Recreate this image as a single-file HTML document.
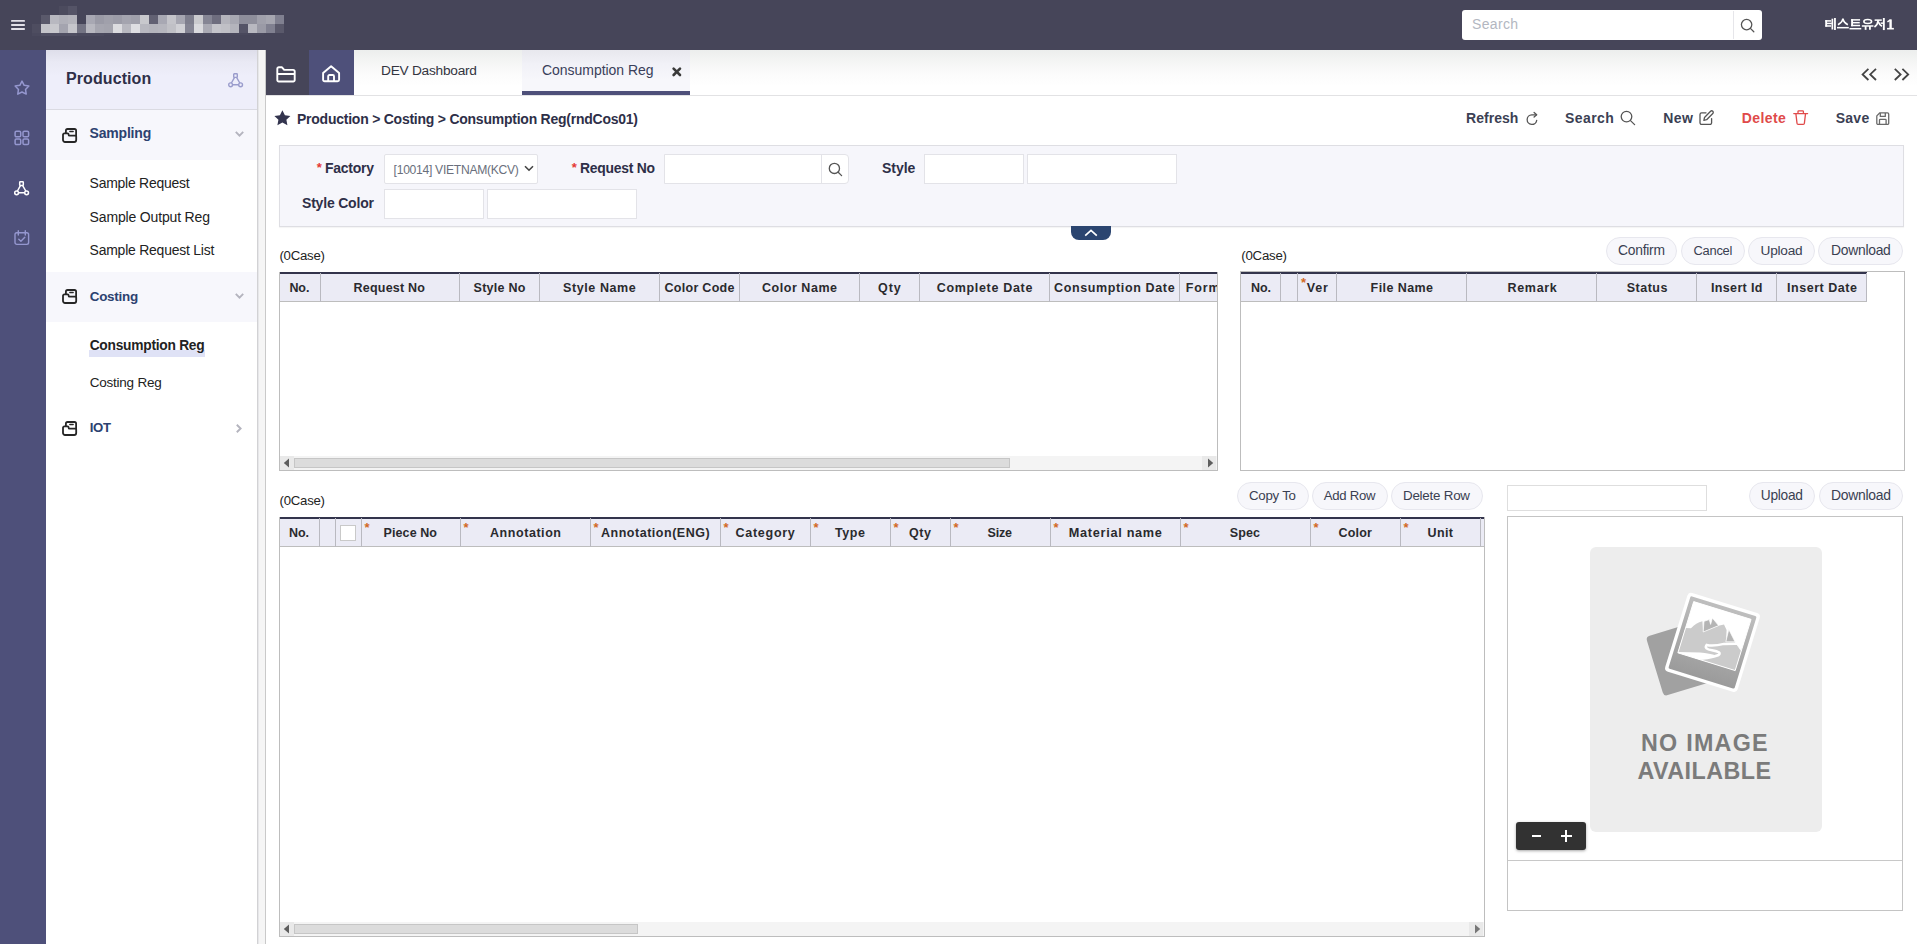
<!DOCTYPE html>
<html lang="en"><head><meta charset="utf-8"><title>Consumption Reg</title>
<style>
html,body{margin:0;padding:0}
body{width:1917px;height:944px;position:relative;overflow:hidden;background:#fff;font-family:"Liberation Sans",sans-serif}
.a{position:absolute;box-sizing:border-box}
.t{position:absolute;white-space:pre;line-height:1;font-family:"Liberation Sans",sans-serif}
svg{position:absolute;overflow:visible}
/* header */
#hdr{left:0;top:0;width:1917px;height:50px;background:#464559}
#rail{left:0;top:50px;width:46px;height:894px;background:#4e507a}
/* sidebar */
#sb{left:46px;top:50px;width:211px;height:894px;background:#fff}
#sbh{left:46px;top:50px;width:211px;height:60px;background:linear-gradient(#dedeea 0,#e9e9f4 12px,#eeeefa 26px);border-bottom:1px solid #dadae2}
.sbg{left:46px;width:211px;height:50px;background:#f7f7fc}
#hl{left:89px;top:350px;width:116px;height:7px;background:#dfe2f6}
/* splitter */
#sp{left:257px;top:50px;width:9px;height:894px;background:#f5f5f5;border-left:1px solid #d2d2d4;border-right:1px solid #c9c9c9}
#sp i{position:absolute;left:0;top:0;width:1px;height:100%;background:#e7e7ea}
/* tab bar */
#tb{left:266px;top:50px;width:1651px;height:46px;background:linear-gradient(#eceeed 0,#f4f5f4 11px,#fbfbfb 23px,#fff 36px);border-bottom:1px solid #e2e2e4}
#tfold{left:266px;top:50px;width:43px;height:45px;background:#464559}
#thome{left:309px;top:50px;width:45px;height:45px;background:#4e507a}
#tact{left:522px;top:50px;width:168px;height:45px;background:linear-gradient(#e8e8ee 0,#f1f1f7 14px,#f7f7fb 30px);border-bottom:4px solid #4e507a}
/* filter */
#flt{left:279px;top:145px;width:1625px;height:82px;background:#f6f6fb;border:1px solid #dedee3;box-shadow:0 1px 1px rgba(0,0,0,.04)}
.in{background:#fff;border:1px solid #e3e3e8;height:30px}
#col{left:1071px;top:226px;width:40px;height:14px;background:#2b4570;border-radius:0 0 8px 8px}
/* grids */
.g{border:1px solid #bdbdbd;background:#fff}
.gh{background:#ebebf5;border-top:2px solid #33344c;border-bottom:1px solid #bdbdbd;height:30px}
.sep{width:1px;background:#b9b9c0}
.sc{background:#f4f4f4;height:14px}
.scb{background:#e9e9e9;width:14px;height:14px}
.th{background:#dcdcdc;border:1px solid #c6c6c6;height:10px}
.pill{height:28px;border-radius:14px;background:#f7f7fb;border:1px solid #e7e7ee}
.ast{color:#d2691e;font-size:13px;font-weight:700;line-height:1;position:absolute;font-family:"Liberation Sans",sans-serif}
.rast{color:#e53935;font-size:13px;font-weight:700;line-height:1;position:absolute;font-family:"Liberation Sans",sans-serif}

</style></head>
<body>
<!-- ===== header ===== -->
<div id="hdr" class="a"></div>
<svg style="left:11px;top:19px" width="14" height="12" viewBox="0 0 14 12"><path d="M0.9 1.9h12.2M0.9 6h12.2M0.9 10h12.2" stroke="#e3e1e9" stroke-width="1.9" stroke-linecap="round" fill="none"/></svg>
<div id="logo" class="a" style="left:32px;top:6px;width:252px;height:27px">
<i style="position:absolute;left:9px;top:9px;width:9px;height:9px;background:#5a596b"></i><i style="position:absolute;left:18px;top:9px;width:9px;height:9px;background:#b8b8c0"></i><i style="position:absolute;left:27px;top:9px;width:9px;height:9px;background:#b0b0b9"></i><i style="position:absolute;left:36px;top:9px;width:9px;height:9px;background:#b4b4bc"></i><i style="position:absolute;left:45px;top:9px;width:9px;height:9px;background:#464559"></i><i style="position:absolute;left:54px;top:9px;width:9px;height:9px;background:#a8a8b3"></i><i style="position:absolute;left:63px;top:9px;width:9px;height:9px;background:#9a9aa6"></i><i style="position:absolute;left:72px;top:9px;width:9px;height:9px;background:#a0a0ab"></i><i style="position:absolute;left:81px;top:9px;width:9px;height:9px;background:#9c9ca8"></i><i style="position:absolute;left:90px;top:9px;width:9px;height:9px;background:#a4a4af"></i><i style="position:absolute;left:99px;top:9px;width:9px;height:9px;background:#a0a0ab"></i><i style="position:absolute;left:108px;top:9px;width:9px;height:9px;background:#c8c8cd"></i><i style="position:absolute;left:117px;top:9px;width:9px;height:9px;background:#626173"></i><i style="position:absolute;left:126px;top:9px;width:9px;height:9px;background:#a8a8b3"></i><i style="position:absolute;left:135px;top:9px;width:9px;height:9px;background:#c4c4ca"></i><i style="position:absolute;left:144px;top:9px;width:9px;height:9px;background:#a6a6b1"></i><i style="position:absolute;left:153px;top:9px;width:9px;height:9px;background:#7e7e8d"></i><i style="position:absolute;left:162px;top:9px;width:9px;height:9px;background:#cacace"></i><i style="position:absolute;left:171px;top:9px;width:9px;height:9px;background:#858594"></i><i style="position:absolute;left:180px;top:9px;width:9px;height:9px;background:#6e6d7e"></i><i style="position:absolute;left:189px;top:9px;width:9px;height:9px;background:#b4b4bc"></i><i style="position:absolute;left:198px;top:9px;width:9px;height:9px;background:#a8a8b2"></i><i style="position:absolute;left:207px;top:9px;width:9px;height:9px;background:#8e8e9b"></i><i style="position:absolute;left:216px;top:9px;width:9px;height:9px;background:#8e8e9b"></i><i style="position:absolute;left:225px;top:9px;width:9px;height:9px;background:#a0a0ab"></i><i style="position:absolute;left:234px;top:9px;width:9px;height:9px;background:#a6a6b0"></i><i style="position:absolute;left:243px;top:9px;width:9px;height:9px;background:#808090"></i><i style="position:absolute;left:9px;top:18px;width:9px;height:9px;background:#c4c4ca"></i><i style="position:absolute;left:18px;top:18px;width:9px;height:9px;background:#c8c8cd"></i><i style="position:absolute;left:27px;top:18px;width:9px;height:9px;background:#a4a4af"></i><i style="position:absolute;left:36px;top:18px;width:9px;height:9px;background:#c6c6cc"></i><i style="position:absolute;left:45px;top:18px;width:9px;height:9px;background:#747484"></i><i style="position:absolute;left:54px;top:18px;width:9px;height:9px;background:#b8b8c0"></i><i style="position:absolute;left:63px;top:18px;width:9px;height:9px;background:#a6a6b0"></i><i style="position:absolute;left:72px;top:18px;width:9px;height:9px;background:#a4a4ae"></i><i style="position:absolute;left:81px;top:18px;width:9px;height:9px;background:#dcdce0"></i><i style="position:absolute;left:90px;top:18px;width:9px;height:9px;background:#b8b8c0"></i><i style="position:absolute;left:99px;top:18px;width:9px;height:9px;background:#dedee2"></i><i style="position:absolute;left:108px;top:18px;width:9px;height:9px;background:#b8b8c0"></i><i style="position:absolute;left:117px;top:18px;width:9px;height:9px;background:#b4b4bc"></i><i style="position:absolute;left:126px;top:18px;width:9px;height:9px;background:#b6b6be"></i><i style="position:absolute;left:135px;top:18px;width:9px;height:9px;background:#c0c0c6"></i><i style="position:absolute;left:144px;top:18px;width:9px;height:9px;background:#d0d0d5"></i><i style="position:absolute;left:153px;top:18px;width:9px;height:9px;background:#848493"></i><i style="position:absolute;left:162px;top:18px;width:9px;height:9px;background:#dadade"></i><i style="position:absolute;left:171px;top:18px;width:9px;height:9px;background:#aaaab4"></i><i style="position:absolute;left:180px;top:18px;width:9px;height:9px;background:#c4c4ca"></i><i style="position:absolute;left:189px;top:18px;width:9px;height:9px;background:#c0c0c6"></i><i style="position:absolute;left:198px;top:18px;width:9px;height:9px;background:#b4b4bc"></i><i style="position:absolute;left:207px;top:18px;width:9px;height:9px;background:#555467"></i><i style="position:absolute;left:216px;top:18px;width:9px;height:9px;background:#b8b8c0"></i><i style="position:absolute;left:225px;top:18px;width:9px;height:9px;background:#9a9aa6"></i><i style="position:absolute;left:234px;top:18px;width:9px;height:9px;background:#808090"></i><i style="position:absolute;left:243px;top:18px;width:9px;height:9px;background:#5a596b"></i><i style="position:absolute;left:0px;top:18px;width:9px;height:9px;background:#4e4d60"></i><i style="position:absolute;left:27px;top:0px;width:9px;height:9px;background:#4c4b5e"></i><i style="position:absolute;left:36px;top:0px;width:9px;height:9px;background:#555467"></i><i style="position:absolute;left:0px;top:27px;width:9px;height:3px;background:#4a495d"></i><i style="position:absolute;left:9px;top:27px;width:36px;height:3px;background:#504f63"></i><i style="position:absolute;left:45px;top:27px;width:27px;height:3px;background:#4b4a5e"></i><i style="position:absolute;left:72px;top:27px;width:160px;height:2px;background:#49485c"></i>
</div>
<div class="a" style="left:1462px;top:10px;width:300px;height:30px;background:#fff;border-radius:3px"></div>
<div class="a" style="left:1733px;top:11px;width:1px;height:28px;background:#e6e6ea"></div>
<svg style="left:1740px;top:18px" width="15" height="15" viewBox="0 0 15 15"><circle cx="6.6" cy="6.6" r="5.2" fill="none" stroke="#555" stroke-width="1.3"/><path d="M10.4 10.4L13.8 13.8" stroke="#555" stroke-width="1.3" stroke-linecap="round"/></svg>
<svg style="left:1825px;top:18px" width="70" height="13" viewBox="0 0 70 13" stroke="#fff" fill="none"><path d="M1.17 2.11L1.17 8.69" stroke-width="1.9"/><path d="M0.33 2.91L6.10 2.91" stroke-width="1.5"/><path d="M1.17 5.45L6.81 5.45" stroke-width="1.5"/><path d="M0.33 7.98L6.10 7.98" stroke-width="1.5"/><path d="M7.37 0.70L7.37 11.50" stroke-width="1.7"/><path d="M9.95 0.09L9.95 11.97" stroke-width="1.8"/><path d="M13.00 6.67Q17.14 4.69 17.93 0.70Q18.78 4.69 22.86 6.67" stroke-width="1.7" fill="none"/><path d="M11.97 9.67L23.80 9.67" stroke-width="1.5"/><path d="M27.09 1.17L27.09 8.22" stroke-width="1.9"/><path d="M26.15 1.88L35.07 1.88" stroke-width="1.5"/><path d="M27.09 4.69L34.74 4.69" stroke-width="1.5"/><path d="M26.15 7.51L35.07 7.51" stroke-width="1.5"/><path d="M24.51 10.70L36.24 10.70" stroke-width="1.5"/><ellipse cx="42.72" cy="3.52" rx="3.85" ry="1.97" stroke-width="1.6" fill="none"/><path d="M36.85 7.98L48.45 7.98" stroke-width="1.5"/><path d="M40.61 7.98L40.61 11.83" stroke-width="1.8"/><path d="M44.93 7.98L44.93 11.83" stroke-width="1.8"/><path d="M49.62 2.11L56.81 2.11" stroke-width="1.5"/><path d="M53.29 2.11Q52.82 6.57 49.44 9.01" stroke-width="1.7" fill="none"/><path d="M53.29 3.76Q54.23 6.57 56.95 8.22" stroke-width="1.7" fill="none"/><path d="M55.63 5.16L58.83 5.16" stroke-width="1.5"/><path d="M58.83 0.00L58.83 12.07" stroke-width="1.9"/><path d="M65.59 1.41L65.59 10.56" stroke-width="2.4"/><path d="M62.44 3.85L65.59 1.88" stroke-width="1.6"/><path d="M62.07 10.70L68.87 10.70" stroke-width="1.6"/></svg>
<!-- ===== rail ===== -->
<div id="rail" class="a"></div>
<svg style="left:13.5px;top:80px" width="16" height="16" viewBox="0 0 16 16" fill="none" stroke="#9597cf" stroke-width="1.5" stroke-linejoin="round"><path d="M8 1.1L10.17 5.31L14.85 6.08L11.52 9.44L12.23 14.12L8 12L3.77 14.12L4.48 9.44L1.15 6.08L5.83 5.31z"/></svg><svg style="left:14px;top:130px" width="16" height="16" viewBox="0 0 16 16" fill="none" stroke="#9597cf" stroke-width="1.5"><rect x="1.1" y="1.2" width="5.6" height="5.6" rx="1.3"/><rect x="9" y="1.2" width="5.6" height="5.6" rx="1.3"/><rect x="1.1" y="9" width="5.6" height="5.6" rx="1.3"/><rect x="9" y="9" width="5.6" height="5.6" rx="1.3"/></svg><svg style="left:13.8px;top:180.5px" width="16" height="15" viewBox="0 0 16 15" fill="none" stroke="#fff" stroke-width="1.5"><rect x="5.7" y="0.8" width="3.6" height="3.6" rx="0.6"/><circle cx="2.6" cy="11.8" r="1.9"/><circle cx="12.6" cy="11.8" r="1.9"/><path d="M6.4 4.6L3.4 10M8.7 4.6L11.8 10M4.6 11.8H10.6"/></svg><svg style="left:14px;top:230px" width="16" height="16" viewBox="0 0 16 16" fill="none" stroke="#9597cf" stroke-width="1.4" stroke-linecap="round" stroke-linejoin="round"><rect x="1" y="2.8" width="13.6" height="11.6" rx="1.8"/><path d="M4.3 0.8V5M11.3 0.8V5M4.8 9.3L6.9 11.2L10.8 7.2"/></svg>
<!-- ===== sidebar ===== -->
<div id="sb" class="a"></div>
<div id="sbh" class="a"></div>
<div class="a sbg" style="top:110px"></div>
<div class="a sbg" style="top:272px"></div>
<div id="hl" class="a"></div>
<svg style="left:227.8px;top:72.5px" width="16" height="15" viewBox="0 0 16 15" fill="none" stroke="#9a9ccc" stroke-width="1.4"><rect x="5.7" y="0.8" width="3.6" height="3.6" rx="0.6"/><circle cx="2.6" cy="11.8" r="1.9"/><circle cx="12.6" cy="11.8" r="1.9"/><path d="M6.4 4.6L3.4 10M8.7 4.6L11.8 10M4.6 11.8H10.6"/></svg><svg style="left:62px;top:127.9px" width="16" height="16" viewBox="0 0 16 16" fill="none" stroke="#262626" stroke-width="1.8" stroke-linejoin="round" stroke-linecap="round"><path d="M3.9 5.2V2.6a1.6 1.6 0 0 1 1.6 -1.6h7a1.6 1.6 0 0 1 1.6 1.6V7.4"/><path d="M7.8 3.5h3.4" stroke-width="1.3"/><path d="M1 6.7a1.3 1.3 0 0 1 1.3 -1.3h3.3a1 1 0 0 1 1 1v0.3a1 1 0 0 0 1 1h5.8a0.8 0.8 0 0 1 0.8 0.8v3.5a2 2 0 0 1 -2 2h-9.2a2 2 0 0 1 -2 -2z"/></svg><svg style="left:62px;top:288.8px" width="16" height="16" viewBox="0 0 16 16" fill="none" stroke="#262626" stroke-width="1.8" stroke-linejoin="round" stroke-linecap="round"><path d="M3.9 5.2V2.6a1.6 1.6 0 0 1 1.6 -1.6h7a1.6 1.6 0 0 1 1.6 1.6V7.4"/><path d="M7.8 3.5h3.4" stroke-width="1.3"/><path d="M1 6.7a1.3 1.3 0 0 1 1.3 -1.3h3.3a1 1 0 0 1 1 1v0.3a1 1 0 0 0 1 1h5.8a0.8 0.8 0 0 1 0.8 0.8v3.5a2 2 0 0 1 -2 2h-9.2a2 2 0 0 1 -2 -2z"/></svg><svg style="left:62px;top:421.2px" width="16" height="16" viewBox="0 0 16 16" fill="none" stroke="#262626" stroke-width="1.8" stroke-linejoin="round" stroke-linecap="round"><path d="M3.9 5.2V2.6a1.6 1.6 0 0 1 1.6 -1.6h7a1.6 1.6 0 0 1 1.6 1.6V7.4"/><path d="M7.8 3.5h3.4" stroke-width="1.3"/><path d="M1 6.7a1.3 1.3 0 0 1 1.3 -1.3h3.3a1 1 0 0 1 1 1v0.3a1 1 0 0 0 1 1h5.8a0.8 0.8 0 0 1 0.8 0.8v3.5a2 2 0 0 1 -2 2h-9.2a2 2 0 0 1 -2 -2z"/></svg><svg style="left:235px;top:131px" width="9" height="6" viewBox="0 0 9 6"><path d="M0.8 0.8L4.5 4.6L8.2 0.8" fill="none" stroke="#b4b4be" stroke-width="1.9"/></svg><svg style="left:235px;top:293px" width="9" height="6" viewBox="0 0 9 6"><path d="M0.8 0.8L4.5 4.6L8.2 0.8" fill="none" stroke="#b4b4be" stroke-width="1.9"/></svg><svg style="left:235.5px;top:423.7px" width="6" height="9" viewBox="0 0 6 9"><path d="M0.8 0.8L4.6 4.5L0.8 8.2" fill="none" stroke="#b4b4be" stroke-width="1.9"/></svg>
<!-- ===== splitter ===== -->
<div id="sp" class="a"><i></i></div>
<!-- ===== tab bar ===== -->
<div id="tb" class="a"></div>
<div id="tfold" class="a"></div>
<div id="thome" class="a"></div>
<div id="tact" class="a"></div>
<svg style="left:276px;top:66px" width="20" height="17" viewBox="0 0 20 17" fill="none" stroke="#fff" stroke-width="1.9" stroke-linejoin="round"><path d="M1.3 14V2.8a1.5 1.5 0 0 1 1.5 -1.5h3.2L8.2 3.9h8.9a1.6 1.6 0 0 1 1.6 1.6V14a1.5 1.5 0 0 1 -1.5 1.5H2.8a1.5 1.5 0 0 1 -1.5 -1.5zM1.3 8h17.4"/></svg><svg style="left:322px;top:65px" width="19" height="18" viewBox="0 0 19 18" fill="none" stroke="#fff" stroke-width="1.9" stroke-linejoin="round"><path d="M1.1 8L9.1 1.2L17.1 8V14.8a1.5 1.5 0 0 1 -1.5 1.5H2.6a1.5 1.5 0 0 1 -1.5 -1.5z"/><path d="M6.2 16.3V11.2a1.2 1.2 0 0 1 1.2 -1.2h3.4a1.2 1.2 0 0 1 1.2 1.2V16.3"/></svg><svg style="left:672px;top:67.4px" width="10" height="10" viewBox="0 0 10 10"><path d="M1.6 1.6L8 8M8 1.6L1.6 8" stroke="#3a3a3a" stroke-width="2.6" stroke-linecap="round"/></svg><svg style="left:1861px;top:67.5px" width="17" height="13" viewBox="0 0 17 13" fill="none" stroke="#444" stroke-width="1.8"><path d="M7.4 0.8L1.6 6.4L7.4 12M15 0.8L9.2 6.4L15 12"/></svg><svg style="left:1892.5px;top:67.5px" width="17" height="13" viewBox="0 0 17 13" fill="none" stroke="#444" stroke-width="1.8"><path d="M1.8 0.8L7.6 6.4L1.8 12M9.4 0.8L15.2 6.4L9.4 12"/></svg>
<!-- ===== breadcrumb + toolbar ===== -->
<svg style="left:273.5px;top:110.3px" width="17" height="16" viewBox="0 0 17 16"><path d="M8.4 0.3L10.9 5.3L16.4 6L12.4 9.8L13.4 15.2L8.4 12.6L3.4 15.2L4.4 9.8L0.4 6L5.9 5.3z" fill="#33344e"/></svg><svg style="left:1525.5px;top:111.5px" width="13" height="14" viewBox="0 0 13 14" fill="none" stroke="#555" stroke-width="1.3" stroke-linecap="round" stroke-linejoin="round"><path d="M10.7 8.3A4.8 4.8 0 1 1 5.8 2.8H10.3"/><path d="M8.1 0.5L10.7 2.8L8.1 5.1"/></svg><svg style="left:1620px;top:109.5px" width="16" height="16" viewBox="0 0 16 16" fill="none" stroke="#555" stroke-width="1.3" stroke-linecap="round"><circle cx="6.5" cy="6.6" r="5.3"/><path d="M10.5 10.6L14.6 14.6"/></svg><svg style="left:1699px;top:109.5px" width="16" height="16" viewBox="0 0 16 16" fill="none" stroke="#555" stroke-width="1.3" stroke-linecap="round" stroke-linejoin="round"><path d="M7 2.8H2.6a1.6 1.6 0 0 0 -1.6 1.6v8.4a1.6 1.6 0 0 0 1.6 1.6h8.4a1.6 1.6 0 0 0 1.6 -1.6V8.6"/><path d="M11.6 1.3a1.5 1.5 0 0 1 2.2 2.2L7.6 9.7L4.9 10.3L5.5 7.5z"/></svg><svg style="left:1793px;top:109.5px" width="16" height="16" viewBox="0 0 16 16" fill="none" stroke="#e04a4a" stroke-width="1.3" stroke-linecap="round" stroke-linejoin="round"><path d="M0.8 3.6H14.6M5 3.4V1.6a0.8 0.8 0 0 1 0.8 -0.8h3.8a0.8 0.8 0 0 1 0.8 0.8V3.4M2.9 3.8L4 13.2a1.2 1.2 0 0 0 1.2 1.1h5a1.2 1.2 0 0 0 1.2 -1.1L12.5 3.8"/></svg><svg style="left:1876px;top:111.7px" width="14" height="13" viewBox="0 0 14 13" fill="none" stroke="#6a6a6a" stroke-width="1.3" stroke-linejoin="round"><path d="M0.8 11.2V3.9L3.9 0.8h7.6a1.2 1.2 0 0 1 1.2 1.2v9.2a1.2 1.2 0 0 1 -1.2 1.2H2a1.2 1.2 0 0 1 -1.2 -1.2z"/><path d="M4.3 0.9V4.4h5V0.9M3.5 12.3V8.1a0.7 0.7 0 0 1 0.7 -0.7h5.2a0.7 0.7 0 0 1 0.7 0.7V12.3"/></svg>
<!-- ===== filter ===== -->
<div id="flt" class="a"></div>
<div class="a in" style="left:384px;top:154px;width:154px;border-radius:2px"></div>
<svg style="left:524px;top:165.4px" width="10" height="7" viewBox="0 0 10 7"><path d="M1 1.2L5 5.2L9 1.2" fill="none" stroke="#444" stroke-width="1.6"/></svg>
<div class="a in" style="left:664px;top:154px;width:185px;border-radius:0 4px 4px 0"></div>
<div class="a" style="left:821px;top:155px;width:1px;height:28px;background:#e3e3e8"></div>
<svg style="left:828px;top:162px" width="15" height="15" viewBox="0 0 15 15"><circle cx="6.4" cy="6.4" r="5.1" fill="none" stroke="#555" stroke-width="1.3"/><path d="M10.2 10.2L13.6 13.6" stroke="#555" stroke-width="1.3" stroke-linecap="round"/></svg>
<div class="a in" style="left:924px;top:154px;width:100px"></div>
<div class="a in" style="left:1027px;top:154px;width:150px"></div>
<div class="a in" style="left:384px;top:189px;width:100px"></div>
<div class="a in" style="left:487px;top:189px;width:150px"></div>
<span class="rast" style="left:316.8px;top:161px">*</span>
<span class="rast" style="left:571.8px;top:161px">*</span>
<div id="col" class="a"></div>
<svg style="left:1084px;top:229px" width="14" height="8" viewBox="0 0 14 8"><path d="M1.2 6.6L7 1.4L12.8 6.6" fill="none" stroke="#fff" stroke-width="1.7"/></svg>
<!-- ===== grid 1 ===== -->
<div class="a g" style="left:279px;top:272px;width:939px;height:199px"></div>
<div class="a gh" style="left:280px;top:272px;width:937px"></div>
<div class="a sep" style="left:320px;top:273px;height:29px"></div><div class="a sep" style="left:459px;top:273px;height:29px"></div><div class="a sep" style="left:539px;top:273px;height:29px"></div><div class="a sep" style="left:659px;top:273px;height:29px"></div><div class="a sep" style="left:739px;top:273px;height:29px"></div><div class="a sep" style="left:859px;top:273px;height:29px"></div><div class="a sep" style="left:919px;top:273px;height:29px"></div><div class="a sep" style="left:1049px;top:273px;height:29px"></div><div class="a sep" style="left:1179px;top:273px;height:29px"></div>
<div class="a sc" style="left:280px;top:456px;width:937px"></div>
<div class="a scb" style="left:280px;top:456px"></div>
<div class="a scb" style="left:1202px;top:456px"></div>
<svg style="left:283px;top:458px" width="7" height="10" viewBox="0 0 7 10"><path d="M6 0.5V9.5L0.8 5z" fill="#5e5e5e"/></svg>
<svg style="left:1207px;top:458px" width="7" height="10" viewBox="0 0 7 10"><path d="M1 0.5V9.5L6.2 5z" fill="#5e5e5e"/></svg>
<div class="a th" style="left:294px;top:458px;width:716px"></div>
<!-- ===== grid 2 ===== -->
<div class="a g" style="left:1240px;top:271px;width:665px;height:200px"></div>
<div class="a gh" style="left:1241px;top:272px;width:626px"></div>
<div class="a sep" style="left:1280px;top:273px;height:29px"></div><div class="a sep" style="left:1297px;top:273px;height:29px"></div><div class="a sep" style="left:1336px;top:273px;height:29px"></div><div class="a sep" style="left:1466px;top:273px;height:29px"></div><div class="a sep" style="left:1596px;top:273px;height:29px"></div><div class="a sep" style="left:1696px;top:273px;height:29px"></div><div class="a sep" style="left:1776px;top:273px;height:29px"></div><div class="a sep" style="left:1866px;top:273px;height:29px"></div>
<span class="ast" style="left:1301px;top:276.4px">*</span>
<div class="a pill" style="left:1606px;top:237px;width:71px"></div><div class="a pill" style="left:1681px;top:237px;width:64px"></div><div class="a pill" style="left:1748px;top:237px;width:67px"></div><div class="a pill" style="left:1818px;top:237px;width:85px"></div><div class="a pill" style="left:1237px;top:482.4px;width:72.0px"></div><div class="a pill" style="left:1312px;top:482.4px;width:76.0px"></div><div class="a pill" style="left:1391px;top:482.4px;width:92.0px"></div><div class="a pill" style="left:1748.5px;top:482.4px;width:66.1px"></div><div class="a pill" style="left:1818.5px;top:482.4px;width:84.3px"></div>
<!-- ===== grid 3 ===== -->
<div class="a g" style="left:279px;top:517px;width:1206px;height:420px"></div>
<div class="a gh" style="left:280px;top:517px;width:1204px"></div>
<div class="a sep" style="left:319px;top:518px;height:29px"></div><div class="a sep" style="left:335px;top:518px;height:29px"></div><div class="a sep" style="left:361px;top:518px;height:29px"></div><div class="a sep" style="left:460px;top:518px;height:29px"></div><div class="a sep" style="left:590px;top:518px;height:29px"></div><div class="a sep" style="left:720px;top:518px;height:29px"></div><div class="a sep" style="left:810px;top:518px;height:29px"></div><div class="a sep" style="left:890px;top:518px;height:29px"></div><div class="a sep" style="left:950px;top:518px;height:29px"></div><div class="a sep" style="left:1050px;top:518px;height:29px"></div><div class="a sep" style="left:1180px;top:518px;height:29px"></div><div class="a sep" style="left:1310px;top:518px;height:29px"></div><div class="a sep" style="left:1400px;top:518px;height:29px"></div><div class="a sep" style="left:1480px;top:518px;height:29px"></div><span class="ast" style="left:364.4px;top:520.8px">*</span><span class="ast" style="left:463.4px;top:520.8px">*</span><span class="ast" style="left:593.4px;top:520.8px">*</span><span class="ast" style="left:723.4px;top:520.8px">*</span><span class="ast" style="left:813.4px;top:520.8px">*</span><span class="ast" style="left:893.4px;top:520.8px">*</span><span class="ast" style="left:953.4px;top:520.8px">*</span><span class="ast" style="left:1053.4px;top:520.8px">*</span><span class="ast" style="left:1183.4px;top:520.8px">*</span><span class="ast" style="left:1313.4px;top:520.8px">*</span><span class="ast" style="left:1403.4px;top:520.8px">*</span>
<div class="a" style="left:340px;top:525px;width:16px;height:16px;background:#fff;border:1px solid #c9c9c9"></div>
<div class="a sc" style="left:280px;top:922px;width:1204px"></div>
<div class="a scb" style="left:280px;top:922px"></div>
<div class="a scb" style="left:1469px;top:922px"></div>
<svg style="left:283px;top:924px" width="7" height="10" viewBox="0 0 7 10"><path d="M6 0.5V9.5L0.8 5z" fill="#5e5e5e"/></svg>
<svg style="left:1474px;top:924px" width="7" height="10" viewBox="0 0 7 10"><path d="M1 0.5V9.5L6.2 5z" fill="#777"/></svg>
<div class="a th" style="left:294px;top:924px;width:344px"></div>
<!-- ===== image panel ===== -->
<div class="a in" style="left:1507px;top:485px;width:200px;height:26px;border-color:#dedede"></div>
<div class="a" style="left:1507px;top:516px;width:396px;height:395px;border:1px solid #c4c4c4;background:#fff"></div>
<div class="a" style="left:1508px;top:860px;width:394px;height:1px;background:#c8c8c8"></div>
<div class="a" style="left:1590px;top:547px;width:232px;height:285px;border-radius:6px;background:#ededed"></div>
<svg style="left:1590px;top:547px" width="232" height="285" viewBox="1590 547 232 285"><defs><linearGradient id="fg" x1="0" y1="0" x2="0" y2="1"><stop offset="0" stop-color="#bebebe"/><stop offset="1" stop-color="#9b9b9b"/></linearGradient><clipPath id="win"><rect x="-30" y="-33.4" width="60" height="53.6" transform="translate(1712.5 642.4) rotate(17.2)"/></clipPath></defs><g transform="translate(1645.8 637) rotate(-17)"><rect x="0" y="0" width="72" height="62" rx="4" fill="#a1a1a1"/></g><g transform="translate(1712.5 642.4) rotate(17.2)"><rect x="-37.9" y="-41.2" width="75.8" height="82.4" rx="4" fill="#fff"/><rect x="-34.6" y="-37.9" width="69.2" height="75.8" rx="1.5" fill="url(#fg)"/><rect x="-30" y="-33.4" width="60" height="53.6" fill="#fff"/></g><g clip-path="url(#win)"><path d="M1670 627.4L1691 628.2Q1696 623 1702.4 621.3L1703 632L1718.5 625.8L1724 624.4L1726.6 630L1726 641.6L1735 641.6L1741 650.5L1744 643.6L1762 644V692H1670z" fill="#cbcbcb"/><path d="M1704 621.3L1709.3 619.6L1710.6 624.4L1712.4 618L1718.6 625.6L1703.2 632z" fill="#b5b5b5" stroke="#fff" stroke-width="0.7"/><path d="M1728.8 629.4L1735 641.8L1725.8 641.8z" fill="#b5b5b5" stroke="#fff" stroke-width="0.7"/><path d="M1746 643.4L1724 643.9Q1713 646.6 1706.6 645Q1703.6 649 1712 650.2Q1722.4 652 1718.6 655Q1711 658.4 1688 659.4" stroke="#fff" stroke-width="2.5" fill="none"/><path d="M1735 641.8L1741 650.5" stroke="#fff" stroke-width="0.8"/><path d="M1676 652L1700 652.5Q1710 653.5 1716 655.5Q1708 659 1694 660L1676 660z" fill="#fff"/></g><rect x="-30" y="-33.4" width="60" height="53.6" transform="translate(1712.5 642.4) rotate(17.2)" fill="none" stroke="#fff" stroke-width="0.9"/></svg>
<div class="a" style="left:1516px;top:822px;width:70px;height:28px;border-radius:3px;background:#323232;box-shadow:0 1px 3px rgba(0,0,0,.35)"></div>
<div class="a" style="left:1532px;top:835px;width:9px;height:2px;background:#fff"></div>
<div class="a" style="left:1560.5px;top:835px;width:11.5px;height:2.2px;background:#fff"></div>
<div class="a" style="left:1565.2px;top:830.3px;width:2.2px;height:11.5px;background:#fff"></div>

<div id="texts">
<span class="t" style="left:66.0px;top:71px;font-size:16px;font-weight:700;color:#2e2f48;letter-spacing:0.085px">Production</span>
<span class="t" style="left:89.6px;top:126px;font-size:14px;font-weight:700;color:#2c4270;letter-spacing:-0.202px">Sampling</span>
<span class="t" style="left:89.6px;top:177px;font-size:13.96px;font-weight:400;color:#222;letter-spacing:-0.238px">Sample Request</span>
<span class="t" style="left:89.6px;top:210px;font-size:14px;font-weight:400;color:#222;letter-spacing:-0.161px">Sample Output Reg</span>
<span class="t" style="left:89.6px;top:244px;font-size:13.94px;font-weight:400;color:#222;letter-spacing:-0.214px">Sample Request List</span>
<span class="t" style="left:89.7px;top:290px;font-size:13.43px;font-weight:700;color:#2c4270;letter-spacing:-0.25px">Costing</span>
<span class="t" style="left:89.7px;top:339px;font-size:13.77px;font-weight:700;color:#222;letter-spacing:-0.254px">Consumption Reg</span>
<span class="t" style="left:89.7px;top:376px;font-size:13.51px;font-weight:400;color:#222;letter-spacing:-0.223px">Costing Reg</span>
<span class="t" style="left:89.7px;top:421px;font-size:13.17px;font-weight:700;color:#2c4270;letter-spacing:-0.329px">IOT</span>
<span class="t" style="left:381.0px;top:64px;font-size:13.7px;font-weight:400;color:#33343f;letter-spacing:-0.247px">DEV Dashboard</span>
<span class="t" style="left:542.0px;top:63px;font-size:14px;font-weight:400;color:#3a3f5a;letter-spacing:-0.04px">Consumption Reg</span>
<span class="t" style="left:297.0px;top:113px;font-size:13.97px;font-weight:700;color:#2e2f48;letter-spacing:-0.224px">Production &gt; Costing &gt; Consumption Reg(rndCos01)</span>
<span class="t" style="left:1466.0px;top:111px;font-size:14px;font-weight:700;color:#3b3f54;letter-spacing:0.043px">Refresh</span>
<span class="t" style="left:1564.9px;top:111px;font-size:14px;font-weight:700;color:#3b3f54;letter-spacing:0.459px">Search</span>
<span class="t" style="left:1663.2px;top:111px;font-size:14px;font-weight:700;color:#3b3f54;letter-spacing:0.502px">New</span>
<span class="t" style="left:1741.8px;top:111px;font-size:14px;font-weight:700;color:#e04a4a;letter-spacing:0.414px">Delete</span>
<span class="t" style="left:1835.7px;top:111px;font-size:14px;font-weight:700;color:#3b3f54;letter-spacing:0.266px">Save</span>
<span class="t" style="left:1472.0px;top:17px;font-size:14px;font-weight:400;color:#b3b7c1;letter-spacing:0.328px">Search</span>
<span class="t" style="left:325.0px;top:161px;font-size:13.98px;font-weight:700;color:#2e2f48;letter-spacing:-0.253px">Factory</span>
<span class="t" style="left:393.6px;top:164px;font-size:12.15px;font-weight:400;color:#6a6f7c;letter-spacing:-0.294px">[10014] VIETNAM(KCV)</span>
<span class="t" style="left:580.0px;top:162px;font-size:13.91px;font-weight:700;color:#2e2f48;letter-spacing:-0.258px">Request No</span>
<span class="t" style="left:882.0px;top:161px;font-size:14px;font-weight:700;color:#2e2f48;letter-spacing:-0.042px">Style</span>
<span class="t" style="left:302.0px;top:196px;font-size:14px;font-weight:700;color:#2e2f48;letter-spacing:-0.191px">Style Color</span>
<span class="t" style="left:279.4px;top:249px;font-size:13.22px;font-weight:400;color:#222;letter-spacing:-0.235px">(0Case)</span>
<span class="t" style="left:1241.3px;top:249px;font-size:13.25px;font-weight:400;color:#222;letter-spacing:-0.236px">(0Case)</span>
<span class="t" style="left:279.5px;top:494px;font-size:13.19px;font-weight:400;color:#222;letter-spacing:-0.235px">(0Case)</span>
<span class="t" style="left:1618.0px;top:244px;font-size:13.84px;font-weight:400;color:#3a3f52;letter-spacing:-0.242px">Confirm</span>
<span class="t" style="left:1693.5px;top:245px;font-size:12.88px;font-weight:400;color:#3a3f52;letter-spacing:-0.241px">Cancel</span>
<span class="t" style="left:1760.6px;top:244px;font-size:13.66px;font-weight:400;color:#3a3f52;letter-spacing:-0.26px">Upload</span>
<span class="t" style="left:1831.0px;top:244px;font-size:13.86px;font-weight:400;color:#3a3f52;letter-spacing:-0.264px">Download</span>
<span class="t" style="left:1249.0px;top:489px;font-size:13.27px;font-weight:400;color:#3a3f52;letter-spacing:-0.242px">Copy To</span>
<span class="t" style="left:1323.8px;top:489px;font-size:13.15px;font-weight:400;color:#3a3f52;letter-spacing:-0.267px">Add Row</span>
<span class="t" style="left:1403.0px;top:489px;font-size:13.36px;font-weight:400;color:#3a3f52;letter-spacing:-0.23px">Delete Row</span>
<span class="t" style="left:1760.8px;top:489px;font-size:13.73px;font-weight:400;color:#3a3f52;letter-spacing:-0.261px">Upload</span>
<span class="t" style="left:1831.0px;top:489px;font-size:13.91px;font-weight:400;color:#3a3f52;letter-spacing:-0.265px">Download</span>
<span class="t" style="left:289.4px;top:282px;font-size:12.5px;font-weight:700;color:#2a2a2e;letter-spacing:-0.07px">No.</span>
<span class="t" style="left:353.5px;top:282px;font-size:12.5px;font-weight:700;color:#2a2a2e;letter-spacing:0.227px">Request No</span>
<span class="t" style="left:473.6px;top:282px;font-size:12.5px;font-weight:700;color:#2a2a2e;letter-spacing:0.255px">Style No</span>
<span class="t" style="left:563.0px;top:282px;font-size:12.5px;font-weight:700;color:#2a2a2e;letter-spacing:0.599px">Style Name</span>
<span class="t" style="left:664.5px;top:282px;font-size:12.5px;font-weight:700;color:#2a2a2e;letter-spacing:0.293px">Color Code</span>
<span class="t" style="left:762.0px;top:282px;font-size:12.5px;font-weight:700;color:#2a2a2e;letter-spacing:0.538px">Color Name</span>
<span class="t" style="left:878.0px;top:282px;font-size:12.5px;font-weight:700;color:#2a2a2e;letter-spacing:0.928px">Qty</span>
<span class="t" style="left:936.7px;top:282px;font-size:12.5px;font-weight:700;color:#2a2a2e;letter-spacing:0.681px">Complete Date</span>
<span class="t" style="left:1054.0px;top:282px;font-size:12.5px;font-weight:700;color:#2a2a2e;letter-spacing:0.633px">Consumption Date</span>
<span class="t" style="left:1185.8px;top:282px;font-size:12.5px;font-weight:700;color:#2a2a2e;letter-spacing:0.817px;width:31px;overflow:hidden">Form</span>
<span class="t" style="left:1251.0px;top:282px;font-size:12.5px;font-weight:700;color:#2a2a2e;letter-spacing:-0.07px">No.</span>
<span class="t" style="left:1306.7px;top:282px;font-size:12.5px;font-weight:700;color:#2a2a2e;letter-spacing:0.916px">Ver</span>
<span class="t" style="left:1370.6px;top:282px;font-size:12.5px;font-weight:700;color:#2a2a2e;letter-spacing:0.417px">File Name</span>
<span class="t" style="left:1507.5px;top:282px;font-size:12.5px;font-weight:700;color:#2a2a2e;letter-spacing:0.685px">Remark</span>
<span class="t" style="left:1626.7px;top:282px;font-size:12.5px;font-weight:700;color:#2a2a2e;letter-spacing:0.499px">Status</span>
<span class="t" style="left:1711.0px;top:282px;font-size:12.5px;font-weight:700;color:#2a2a2e;letter-spacing:0.347px">Insert Id</span>
<span class="t" style="left:1787.0px;top:282px;font-size:12.5px;font-weight:700;color:#2a2a2e;letter-spacing:0.539px">Insert Date</span>
<span class="t" style="left:289.0px;top:527px;font-size:12.5px;font-weight:700;color:#2a2a2e;letter-spacing:-0.07px">No.</span>
<span class="t" style="left:383.6px;top:527px;font-size:12.5px;font-weight:700;color:#2a2a2e;letter-spacing:0.084px">Piece No</span>
<span class="t" style="left:490.0px;top:527px;font-size:12.5px;font-weight:700;color:#2a2a2e;letter-spacing:0.559px">Annotation</span>
<span class="t" style="left:601.0px;top:527px;font-size:12.5px;font-weight:700;color:#2a2a2e;letter-spacing:0.523px">Annotation(ENG)</span>
<span class="t" style="left:735.5px;top:527px;font-size:12.5px;font-weight:700;color:#2a2a2e;letter-spacing:0.73px">Category</span>
<span class="t" style="left:835.0px;top:527px;font-size:12.5px;font-weight:700;color:#2a2a2e;letter-spacing:0.583px">Type</span>
<span class="t" style="left:909.0px;top:527px;font-size:12.5px;font-weight:700;color:#2a2a2e;letter-spacing:0.578px">Qty</span>
<span class="t" style="left:987.5px;top:527px;font-size:12.5px;font-weight:700;color:#2a2a2e;letter-spacing:-0.172px">Size</span>
<span class="t" style="left:1068.8px;top:527px;font-size:12.7px;font-weight:700;color:#2a2a2e;letter-spacing:0.706px">Material name</span>
<span class="t" style="left:1229.8px;top:527px;font-size:12.5px;font-weight:700;color:#2a2a2e;letter-spacing:0.103px">Spec</span>
<span class="t" style="left:1338.4px;top:527px;font-size:12.5px;font-weight:700;color:#2a2a2e;letter-spacing:0.24px">Color</span>
<span class="t" style="left:1427.6px;top:527px;font-size:12.5px;font-weight:700;color:#2a2a2e;letter-spacing:0.363px">Unit</span>
<span class="t" style="left:1641.0px;top:732px;font-size:23.3px;font-weight:700;color:#7b7b7b;letter-spacing:1.26px">NO IMAGE</span>
<span class="t" style="left:1637.5px;top:760px;font-size:23.3px;font-weight:700;color:#7b7b7b;letter-spacing:0.455px">AVAILABLE</span>
</div>
</body></html>
